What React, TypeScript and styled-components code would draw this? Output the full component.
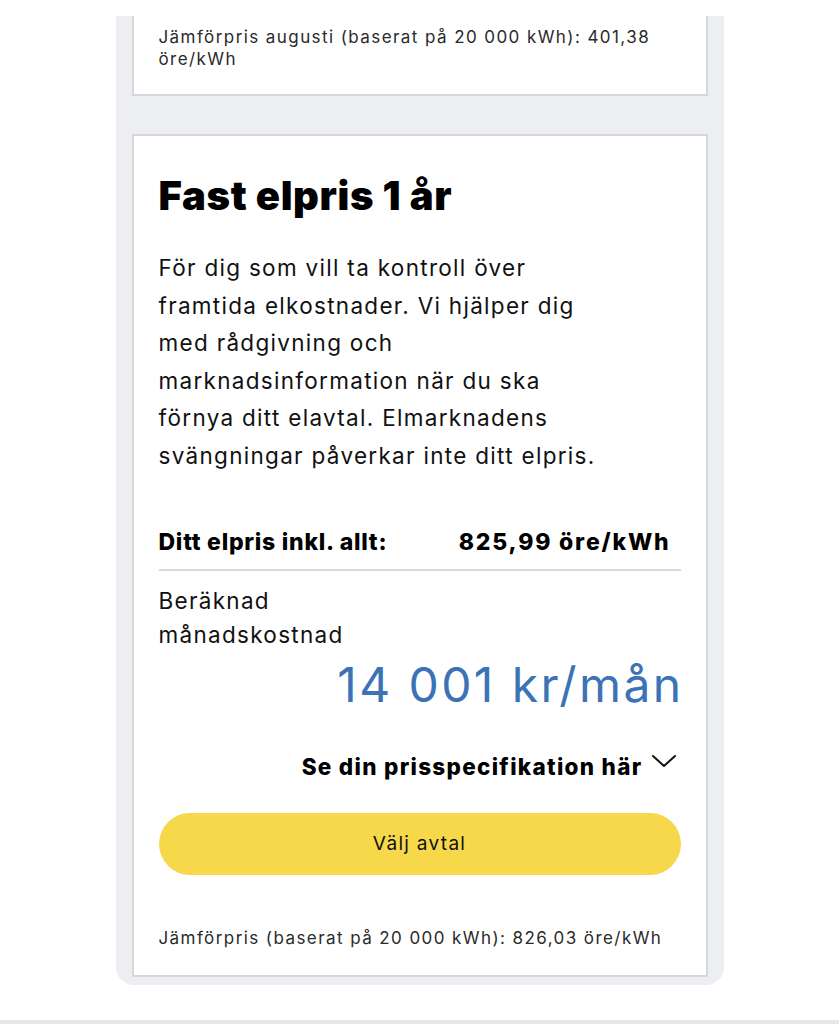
import React from "react";
import styled, { createGlobalStyle } from "styled-components";

const Global = createGlobalStyle`
  html, body { margin: 0; padding: 0; background: #ffffff; }
  body { font-family: Inter, "Noto Sans", Arial, sans-serif; color: #111; }
`;

const Page = styled.div`
  width: 839px;
  height: 1024px;
  display: flex;
  flex-direction: column;
  align-items: center;
  padding-top: 16px;
  box-sizing: border-box;
  border-bottom: 4px solid #e6e7eb;
`;

const Panel = styled.div`
  width: 608px;
  background: #eceef2;
  border-radius: 0 0 18px 18px;
  padding: 0 16px 8px;
  box-sizing: border-box;
  display: flex;
  flex-direction: column;
  gap: 38px;
`;

const Card = styled.div<{ $cut?: boolean }>`
  background: #ffffff;
  border: 2px solid #d6d7db;
  border-top: ${(p) => (p.$cut ? "none" : "2px solid #d6d7db")};
  padding: ${(p) => (p.$cut ? "10px 25px 24px" : "37px 25px 26px")};
  display: flex;
  flex-direction: column;
`;

const SmallText = styled.p`
  margin: 0;
  font-size: 17px;
  line-height: 22px;
  color: #2a2a2a;
  letter-spacing: 1.42px;
`;

const Title = styled.h2`
  margin: 0 0 30px;
  font-size: 40px;
  line-height: 46px;
  font-weight: 900;
  letter-spacing: 0.6px;
  color: #000;
`;

const Body = styled.p`
  margin: 0 0 52px;
  font-size: 22.5px;
  line-height: 37.6px;
  color: #111;
  letter-spacing: 1.3px;
`;

const PriceRow = styled.div`
  display: flex;
  justify-content: space-between;
  align-items: center;
  padding: 0 12px 12px 0;
  border-bottom: 2px solid #d9dade;
  font-size: 23px;
  font-weight: 800;
  line-height: 30px;
  color: #000;
`;

const RowLabel = styled.span`
  letter-spacing: 0.75px;
`;

const RowValue = styled.span`
  letter-spacing: 1.8px;
  margin-right: -2px;
`;

const CostBlock = styled.div`
  display: flex;
  flex-direction: column;
  padding-top: 13px;
`;

const CostLabel = styled.div`
  font-size: 22.5px;
  line-height: 34px;
  color: #111;
  letter-spacing: 1.3px;
`;

const CostValue = styled.div`
  align-self: flex-end;
  font-size: 48px;
  line-height: 58px;
  color: #3b73b6;
  letter-spacing: 2.4px;
  margin-top: 4px;
  margin-right: -3px;
`;

const SpecLink = styled.button`
  align-self: flex-end;
  display: flex;
  align-items: center;
  gap: 8px;
  background: none;
  border: none;
  padding: 0 4px 0 0;
  margin-top: 38px;
  font-family: inherit;
  font-size: 22.5px;
  font-weight: 800;
  color: #000;
  letter-spacing: 1.3px;
  line-height: 30px;
  cursor: pointer;
`;

const Chevron = styled.svg`
  width: 26px;
  height: 14px;
  margin-top: -12px;
`;

const PrimaryButton = styled.button`
  margin-top: 31px;
  height: 62px;
  border: none;
  border-radius: 31px;
  background: #f6d84a;
  font-family: inherit;
  font-size: 19px;
  color: #111;
  letter-spacing: 1.3px;
  cursor: pointer;
`;

const Footer = styled(SmallText)`
  margin-top: 52px;
`;

export default function App() {
  return (
    <>
      <Global />
      <Page>
        <Panel>
          <Card $cut>
            <SmallText>
              Jämförpris augusti (baserat på 20 000 kWh): 401,38
              <br />
              öre/kWh
            </SmallText>
          </Card>
          <Card>
            <Title>Fast elpris 1 år</Title>
            <Body>
              För dig som vill ta kontroll över
              <br />
              framtida elkostnader. Vi hjälper dig
              <br />
              med rådgivning och
              <br />
              marknadsinformation när du ska
              <br />
              förnya ditt elavtal. Elmarknadens
              <br />
              svängningar påverkar inte ditt elpris.
            </Body>
            <PriceRow>
              <RowLabel>Ditt elpris inkl. allt:</RowLabel>
              <RowValue>825,99 öre/kWh</RowValue>
            </PriceRow>
            <CostBlock>
              <CostLabel>
                Beräknad
                <br />
                månadskostnad
              </CostLabel>
              <CostValue>14 001 kr/mån</CostValue>
            </CostBlock>
            <SpecLink>
              Se din prisspecifikation här
              <Chevron viewBox="0 0 26 14" fill="none">
                <path d="M2 2l11 10L24 2" stroke="#111" strokeWidth="2" strokeLinecap="round" strokeLinejoin="round" />
              </Chevron>
            </SpecLink>
            <PrimaryButton>Välj avtal</PrimaryButton>
            <Footer>Jämförpris (baserat på 20 000 kWh): 826,03 öre/kWh</Footer>
          </Card>
        </Panel>
      </Page>
    </>
  );
}
